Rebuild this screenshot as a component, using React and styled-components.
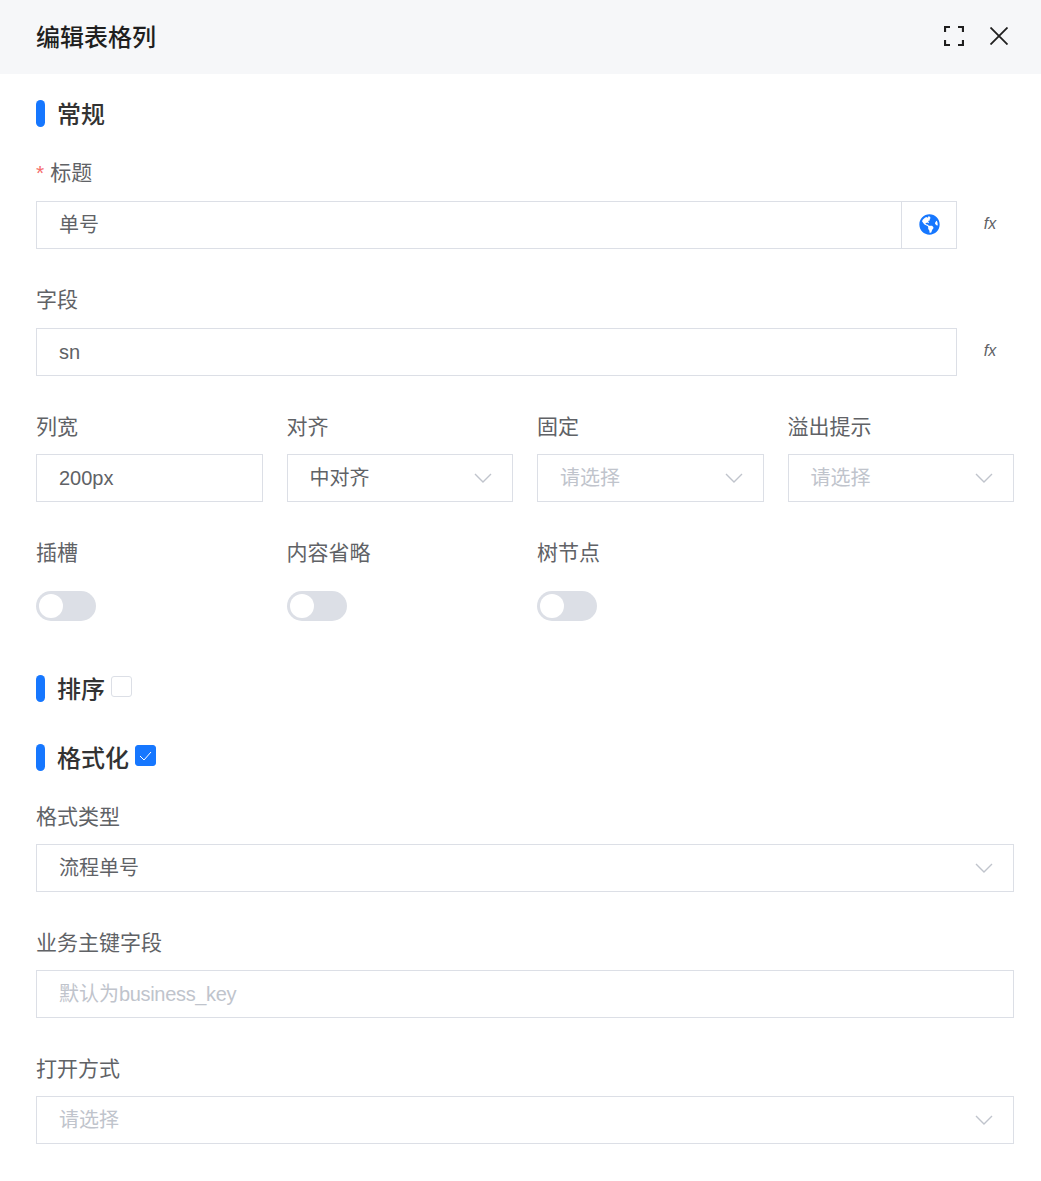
import React from "react";
import styled, { createGlobalStyle } from "styled-components";
import { FaGlobeAmericas } from "react-icons/fa";

const GlobalStyle = createGlobalStyle`
  html, body {
    margin: 0;
    padding: 0;
    background: #fff;
  }
  * {
    box-sizing: border-box;
  }
`;

const Dialog = styled.div`
  width: 1041px;
  height: 1181px;
  overflow: hidden;
  font-family: "Liberation Sans", "Noto Sans CJK SC", sans-serif;
  color: #606266;
`;

const Header = styled.header`
  height: 74px;
  background: #f6f7f9;
  padding: 0 33px 0 36px;
  display: flex;
  align-items: center;
  justify-content: space-between;
`;

const DialogTitle = styled.h1`
  margin: 2px 0 0;
  font-size: 24px;
  line-height: 34px;
  font-weight: 500;
  color: #1f1f1f;
`;

const HeaderTools = styled.div`
  display: flex;
  align-items: center;
  gap: 26px;
  margin-bottom: 2px;
`;

const Body = styled.div`
  padding: 26px 27px 0 36px;
`;

const SectionHead = styled.div`
  display: flex;
  align-items: center;
  height: 27px;
  margin-top: ${(p) => p.$top || 0}px;
  margin-bottom: ${(p) => p.$bottom || 0}px;
`;

const SectionBar = styled.span`
  width: 9px;
  height: 27px;
  border-radius: 5px;
  background: #1677ff;
  margin-right: 12px;
`;

const SectionName = styled.span`
  font-size: 24px;
  line-height: 30px;
  font-weight: 500;
  color: #333;
  margin-top: 2px;
`;

const Check = styled.span`
  width: 21px;
  height: 21px;
  margin-left: 6px;
  margin-top: -4px;
  border-radius: 3px;
  border: 1px solid ${(p) => (p.$on ? "#1677ff" : "#dcdfe6")};
  background: ${(p) => (p.$on ? "#1677ff" : "#fff")};
  display: flex;
  align-items: center;
  justify-content: center;
`;

const Field = styled.div`
  margin-bottom: ${(p) => p.$gap ?? 34}px;
`;

const Label = styled.label`
  display: block;
  height: 32px;
  padding-top: ${(p) => p.$nudge ?? 1}px;
  margin-bottom: 12px;
  font-size: 21px;
  line-height: 32px;
  color: #606266;
`;

const Star = styled.span`
  color: #f56c6c;
  margin-right: 6px;
  font-size: 21px;
`;

const ControlRow = styled.div`
  display: flex;
  align-items: stretch;
`;

const InputBox = styled.div`
  flex: 1;
  min-width: 0;
  height: 48px;
  padding: 0 20px 0 22px;
  border: 1px solid #dcdfe6;
  background: #fff;
  display: flex;
  align-items: center;
  justify-content: space-between;
  font-size: 20px;
  line-height: 28px;
  color: ${(p) => (p.$placeholder ? "#c0c4cc" : "#606266")};
`;

const TightText = styled.span`
  letter-spacing: -0.33px;
`;

const Addon = styled.div`
  width: 56px;
  height: 48px;
  margin-left: -1px;
  border: 1px solid #dcdfe6;
  display: flex;
  align-items: center;
  justify-content: center;
  padding-bottom: 2px;
  color: #1677ff;
  font-size: 21px;
`;

const FxButton = styled.span`
  width: 57px;
  height: 48px;
  padding: 0 0 2px 9px;
  display: flex;
  align-items: center;
  justify-content: center;
  font-style: italic;
  font-size: 16px;
  color: #606266;
`;

const Grid = styled.div`
  display: grid;
  grid-template-columns: repeat(4, 1fr);
  column-gap: 24px;
`;

const Switch = styled.span`
  display: block;
  width: 60px;
  height: 30px;
  margin-top: 23px;
  border-radius: 15px;
  background: #dcdfe6;
  padding: 3px;
`;

const Knob = styled.span`
  display: block;
  width: 24px;
  height: 24px;
  border-radius: 50%;
  background: #fff;
`;

const Chevron = () => (
  <svg width="18" height="10" viewBox="0 0 18 10" fill="none" stroke="#c0c4cc" strokeWidth="1.4">
    <path d="M1 1l8 8 8-8" />
  </svg>
);

const Select = ({ value, placeholder }) => (
  <InputBox $placeholder={!value}>
    <span>{value || placeholder}</span>
    <Chevron />
  </InputBox>
);

const Section = ({ name, checked, top, bottom }) => (
  <SectionHead $top={top} $bottom={bottom}>
    <SectionBar />
    <SectionName>{name}</SectionName>
    {checked !== undefined && (
      <Check $on={checked}>
        {checked && (
          <svg width="13" height="10" viewBox="0 0 13 10" fill="none" stroke="#fff" strokeWidth="1">
            <path d="M1 5l4 4 7-8" />
          </svg>
        )}
      </Check>
    )}
  </SectionHead>
);

export default function App() {
  return (
    <Dialog>
      <GlobalStyle />
      <Header>
        <DialogTitle>编辑表格列</DialogTitle>
        <HeaderTools>
          <svg width="20" height="20" viewBox="0 0 20 20" fill="none" stroke="#1f1f1f" strokeWidth="2.2">
            <path d="M1 6V1h5M14 1h5v5M19 14v5h-5M6 19H1v-5" />
          </svg>
          <svg width="18" height="18" viewBox="0 0 18 18" fill="none" stroke="#1f1f1f" strokeWidth="1.8">
            <path d="M.5.5l17 17M17.5.5l-17 17" />
          </svg>
        </HeaderTools>
      </Header>
      <Body>
        <Section name="常规" bottom={30} />
        <Field $gap={35}>
          <Label $nudge={0}>
            <Star>*</Star>标题
          </Label>
          <ControlRow>
            <InputBox>单号</InputBox>
            <Addon>
              <FaGlobeAmericas />
            </Addon>
            <FxButton>fx</FxButton>
          </ControlRow>
        </Field>
        <Field>
          <Label $nudge={0}>字段</Label>
          <ControlRow>
            <InputBox>sn</InputBox>
            <FxButton>fx</FxButton>
          </ControlRow>
        </Field>
        <Grid>
          <Field>
            <Label>列宽</Label>
            <InputBox>200px</InputBox>
          </Field>
          <Field>
            <Label>对齐</Label>
            <Select value="中对齐" />
          </Field>
          <Field>
            <Label>固定</Label>
            <Select placeholder="请选择" />
          </Field>
          <Field>
            <Label>溢出提示</Label>
            <Select placeholder="请选择" />
          </Field>
          <Field $gap={0}>
            <Label>插槽</Label>
            <Switch><Knob /></Switch>
          </Field>
          <Field $gap={0}>
            <Label>内容省略</Label>
            <Switch><Knob /></Switch>
          </Field>
          <Field $gap={0}>
            <Label>树节点</Label>
            <Switch><Knob /></Switch>
          </Field>
        </Grid>
        <Section name="排序" checked={false} top={54} />
        <Section name="格式化" checked={true} top={42} bottom={29} />
        <Field>
          <Label>格式类型</Label>
          <Select value="流程单号" />
        </Field>
        <Field>
          <Label>业务主键字段</Label>
          <InputBox $placeholder>
            <span>默认为<TightText>business_key</TightText></span>
          </InputBox>
        </Field>
        <Field $gap={0}>
          <Label>打开方式</Label>
          <Select placeholder="请选择" />
        </Field>
      </Body>
    </Dialog>
  );
}
